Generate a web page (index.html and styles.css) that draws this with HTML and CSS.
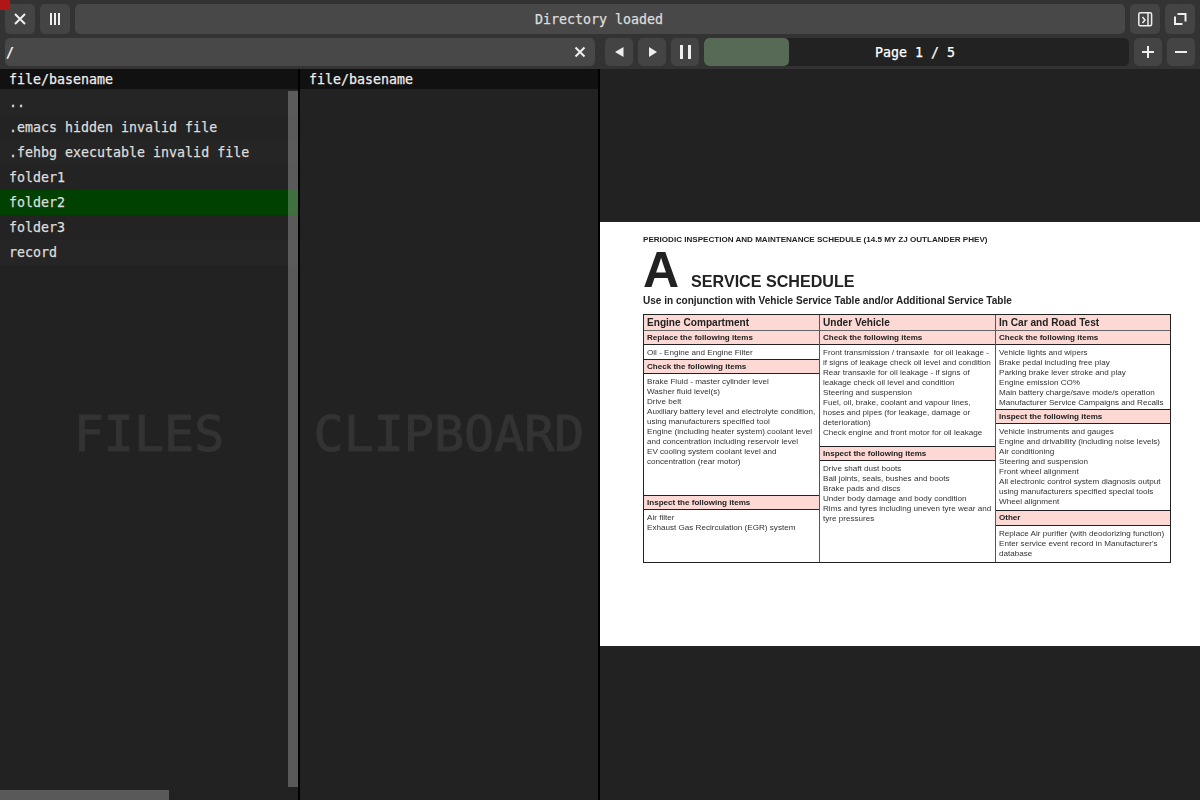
FILE: index.html
```html
<!DOCTYPE html>
<html lang="en">
<head>
    <meta charset="UTF-8">
    <title>Directory loaded</title>
    <link rel="stylesheet" href="styles.css">
</head>
<body>
    <div class="corner"></div>
    <header class="toolbar">
        <div class="row row-top">
            <button class="btn btn-lg"><svg width="14" height="14" viewBox="0 0 14 14"><path d="M2 2 12 12M12 2 2 12" class="ico"/></svg></button>
            <button class="btn btn-lg"><svg width="12" height="12" viewBox="0 0 12 12"><path d="M2 0V12M6 0V12M10 0V12" class="ico"/></svg></button>
            <div class="status">Directory loaded</div>
            <button class="btn btn-lg"><svg width="16" height="16" viewBox="0 0 16 16"><rect x="1.8" y="1.8" width="12.8" height="13" rx="1.5" class="ico-line"/><path d="M11 1.8V14.8M5.5 6 8 9 5.5 12" class="ico-line"/></svg></button>
            <button class="btn btn-lg"><svg width="14" height="14" viewBox="0 0 14 14"><path d="M4.5 2H12.5V9.5M2 4.5V12H9.5" class="ico"/></svg></button>
        </div>
        <div class="row row-bottom">
            <div class="path">
                <span class="path-text">/</span>
                <svg width="12" height="12" viewBox="0 0 12 12"><path d="M1.5 1.5 10.5 10.5M10.5 1.5 1.5 10.5" class="ico"/></svg>
            </div>
            <div class="page-btns">
                <button class="btn btn-sm"><svg width="10" height="10" viewBox="0 0 10 10"><path d="M9.5 0V10L1 5Z" class="ico-fill"/></svg></button>
                <button class="btn btn-sm"><svg width="10" height="10" viewBox="0 0 10 10"><path d="M2 0V10L10 5Z" class="ico-fill"/></svg></button>
                <button class="btn btn-sm"><svg width="14" height="14" viewBox="0 0 14 14"><path d="M2 0H5V14H2ZM10 0H13V14H10Z" class="ico-fill"/></svg></button>
            </div>
            <div class="progress">
                <div class="progress-fill" style="width: 20%"></div>
                <span class="progress-text">Page 1 / 5</span>
            </div>
            <button class="btn btn-sm"><svg width="12" height="12" viewBox="0 0 12 12"><path d="M0 6H12M6 0V12" class="ico"/></svg></button>
            <button class="btn btn-sm"><svg width="12" height="12" viewBox="0 0 12 12"><path d="M0 6H12" class="ico"/></svg></button>
        </div>
    </header>

    <main class="panes">
        <section class="pane">
            <div class="pane-head">file/basename</div>
            <ul class="files">
                <li>..</li>
                <li>.emacs hidden invalid file</li>
                <li>.fehbg executable invalid file</li>
                <li>folder1</li>
                <li class="selected">folder2</li>
                <li>folder3</li>
                <li>record</li>
            </ul>
            <div class="watermark">FILES</div>
            <div class="vscroll"></div>
            <div class="hscroll"></div>
        </section>
        <section class="pane">
            <div class="pane-head">file/basename</div>
            <div class="watermark">CLIPBOARD</div>
        </section>
        <section class="viewer">
            <article class="sheet">
                <div class="sheet-title">PERIODIC INSPECTION AND MAINTENANCE SCHEDULE (14.5 MY ZJ OUTLANDER PHEV)</div>
                <div class="sheet-head">
                    <span class="sheet-letter">A</span>
                    <span class="sheet-name">SERVICE SCHEDULE</span>
                </div>
                <div class="sheet-note">Use in conjunction with Vehicle Service Table and/or Additional Service Table</div>
                <div class="sched">
                    <div class="col">
                        <div class="col-head">Engine Compartment</div>
                        <div class="col-sub">Replace the following items</div>
                        <div class="col-body">Oil - Engine and Engine Filter</div>
                        <div class="col-sub">Check the following items</div>
                        <div class="col-body grow">Brake Fluid - master cylinder level<br>Washer fluid level(s)<br>Drive belt<br>Auxiliary battery level and electrolyte condition,<br>using manufacturers specified tool<br>Engine (including heater system) coolant level<br>and concentration including reservoir level<br>EV cooling system coolant level and<br>concentration (rear motor)</div>
                        <div class="col-sub">Inspect the following items</div>
                        <div class="col-body fill-2">Air filter<br>Exhaust Gas Recirculation (EGR) system</div>
                    </div>
                    <div class="col">
                        <div class="col-head">Under Vehicle</div>
                        <div class="col-sub">Check the following items</div>
                        <div class="col-body fill-1">Front transmission / transaxle&nbsp; for oil leakage -<br>if signs of leakage check oil level and condition<br>Rear transaxle for oil leakage - if signs of<br>leakage check oil level and condition<br>Steering and suspension<br>Fuel, oil, brake, coolant and vapour lines,<br>hoses and pipes (for leakage, damage or<br>deterioration)<br>Check engine and front motor for oil leakage</div>
                        <div class="col-sub">Inspect the following items</div>
                        <div class="col-body grow">Drive shaft dust boots<br>Ball joints, seals, bushes and boots<br>Brake pads and discs<br>Under body damage and body condition<br>Rims and tyres including uneven tyre wear and<br>tyre pressures</div>
                    </div>
                    <div class="col">
                        <div class="col-head">In Car and Road Test</div>
                        <div class="col-sub">Check the following items</div>
                        <div class="col-body">Vehicle lights and wipers<br>Brake pedal including free play<br>Parking brake lever stroke and play<br>Engine emission CO%<br>Main battery charge/save mode/s operation<br>Manufacturer Service Campaigns and Recalls</div>
                        <div class="col-sub">Inspect the following items</div>
                        <div class="col-body fill-3">Vehicle instruments and gauges<br>Engine and drivability (including noise levels)<br>Air conditioning<br>Steering and suspension<br>Front wheel alignment<br>All electronic control system diagnosis output<br>using manufacturers specified special tools<br>Wheel alignment</div>
                        <div class="col-sub sub-other">Other</div>
                        <div class="col-body grow">Replace Air purifier (with deodorizing function)<br>Enter service event record in Manufacturer's<br>database</div>
                    </div>
                </div>
            </article>
        </section>
    </main>
</body>
</html>
```

FILE: styles.css
```css
* {
    box-sizing: border-box;
}
html, body {
    height: 100%;
}
body {
    margin: 0;
    background: #222;
    color: #eee;
    font-family: "DejaVu Sans Mono", monospace;
    font-size: 13.3px;
    -webkit-text-stroke: 0.25px;
    overflow: hidden;
    display: flex;
    flex-direction: column;
}
.corner {
    position: absolute;
    left: 0;
    top: 0;
    width: 10px;
    height: 10px;
    background: #b01616;
}

/* toolbar */
.toolbar {
    background: #333;
    height: 69px;
    padding: 4px 5px 0;
}
.row {
    display: flex;
    gap: 5px;
}
.row-top {
    height: 30px;
    margin-bottom: 4px;
}
.row-bottom {
    height: 28px;
}
.btn {
    border: 0;
    padding: 0;
    background: #444;
    border-radius: 5px;
    display: flex;
    align-items: center;
    justify-content: center;
    flex: none;
}
.btn-lg {
    width: 30px;
    height: 30px;
}
.btn-sm {
    width: 28px;
    height: 28px;
}
.ico, .ico-line {
    fill: none;
    stroke: #eee;
}
.ico {
    stroke-width: 2;
}
.ico-line {
    stroke-width: 1.5;
}
.ico-fill {
    fill: #eee;
}
.status {
    flex: 1;
    background: #484848;
    border-radius: 5px;
    display: flex;
    align-items: center;
    justify-content: center;
    padding-right: 2px;
    color: #ddd;
}
.path {
    width: 590px;
    background: #484848;
    border-radius: 5px;
    display: flex;
    align-items: center;
    justify-content: space-between;
    padding: 0 9px 0 1px;
    color: #fff;
    margin-right: 5px;
    flex: none;
}
.page-btns {
    display: flex;
    gap: 5px;
}
.progress {
    flex: 1;
    background: #222;
    border-radius: 5px;
    position: relative;
    display: flex;
    align-items: center;
    justify-content: center;
    overflow: hidden;
}
.progress-fill {
    position: absolute;
    left: 0;
    top: 0;
    bottom: 0;
    background: #566a56;
    border-radius: 5px;
}
.progress-text {
    position: relative;
    color: #fff;
    margin-right: 3px;
}

/* panes */
.panes {
    flex: 1;
    display: flex;
    min-height: 0;
}
.pane {
    width: 300px;
    flex: none;
    border-right: 2px solid #000;
    position: relative;
    overflow: hidden;
}
.pane-head {
    height: 20px;
    line-height: 21px;
    background: #111;
    padding-left: 9px;
    color: #eee;
}
.files {
    list-style: none;
    margin: 0;
    padding: 1px 0 0;
    color: #ddd;
}
.files li {
    height: 25px;
    line-height: 25px;
    padding-left: 9px;
    background: #232323;
}
.files li:nth-child(odd) {
    background: #252525;
}
.files li.selected {
    background: #004000;
}
.watermark {
    position: absolute;
    left: 0;
    right: 0;
    top: 335px;
    text-align: center;
    font-size: 50px;
    line-height: 60px;
    color: #333;
    -webkit-text-stroke: 1px #333;
}
.vscroll {
    position: absolute;
    right: 0;
    top: 22px;
    width: 10px;
    height: 696px;
    background: rgba(255, 255, 255, 0.25);
}
.hscroll {
    position: absolute;
    left: 0;
    bottom: 0;
    width: 169px;
    height: 10px;
    background: rgba(255, 255, 255, 0.25);
}

/* pdf page */
.viewer {
    flex: 1;
    display: flex;
    align-items: center;
    padding-bottom: 1px;
}
.sheet {
    width: 100%;
    height: 424px;
    background: #fff;
    color: #222;
    font-family: "Liberation Sans", Arial, sans-serif;
    -webkit-text-stroke: 0;
    padding: 13px 29px 0 43px;
    white-space: nowrap;
}
.sheet > * {
    filter: blur(0.3px);
}
.sheet-title {
    font-size: 8.07px;
    font-weight: bold;
    line-height: 10px;
}
.sheet-head {
    display: flex;
    align-items: baseline;
    gap: 12px;
    height: 46px;
    line-height: 46px;
    font-weight: bold;
    margin-top: 2px;
}
.sheet-letter {
    font-size: 50px;
}
.sheet-name {
    font-size: 16.1px;
}
.sheet-note {
    font-size: 10.05px;
    font-weight: bold;
    line-height: 12px;
    margin-top: 2px;
}
.sched {
    display: grid;
    grid-template-columns: 176px 176px 174px;
    width: 528px;
    height: 249px;
    margin-top: 7px;
    border: 1px solid #222;
}
.col {
    display: flex;
    flex-direction: column;
    border-right: 1px solid #555;
}
.col:last-child {
    border-right: 0;
}
.col-head, .col-sub {
    background: #fcd9d4;
    font-weight: bold;
    padding-left: 3px;
}
.col-head {
    height: 16px;
    font-size: 10.1px;
    line-height: 15px;
    border-bottom: 1px solid #666;
}
.col-sub {
    height: 14px;
    font-size: 8.05px;
    line-height: 14px;
    border-bottom: 1px solid #222;
}
.col-body + .col-sub {
    height: 15px;
    border-top: 1px solid #222;
}
.col-body + .sub-other {
    height: 16px;
}
.col-body {
    font-size: 8.1px;
    line-height: 10px;
    padding: 3px 3px 1px;
    color: #333;
}
.grow {
    flex: 1;
}
.fill-1 {
    height: 101px;
}
.fill-2 {
    height: 52px;
}
.fill-3 {
    height: 86px;
}
```
